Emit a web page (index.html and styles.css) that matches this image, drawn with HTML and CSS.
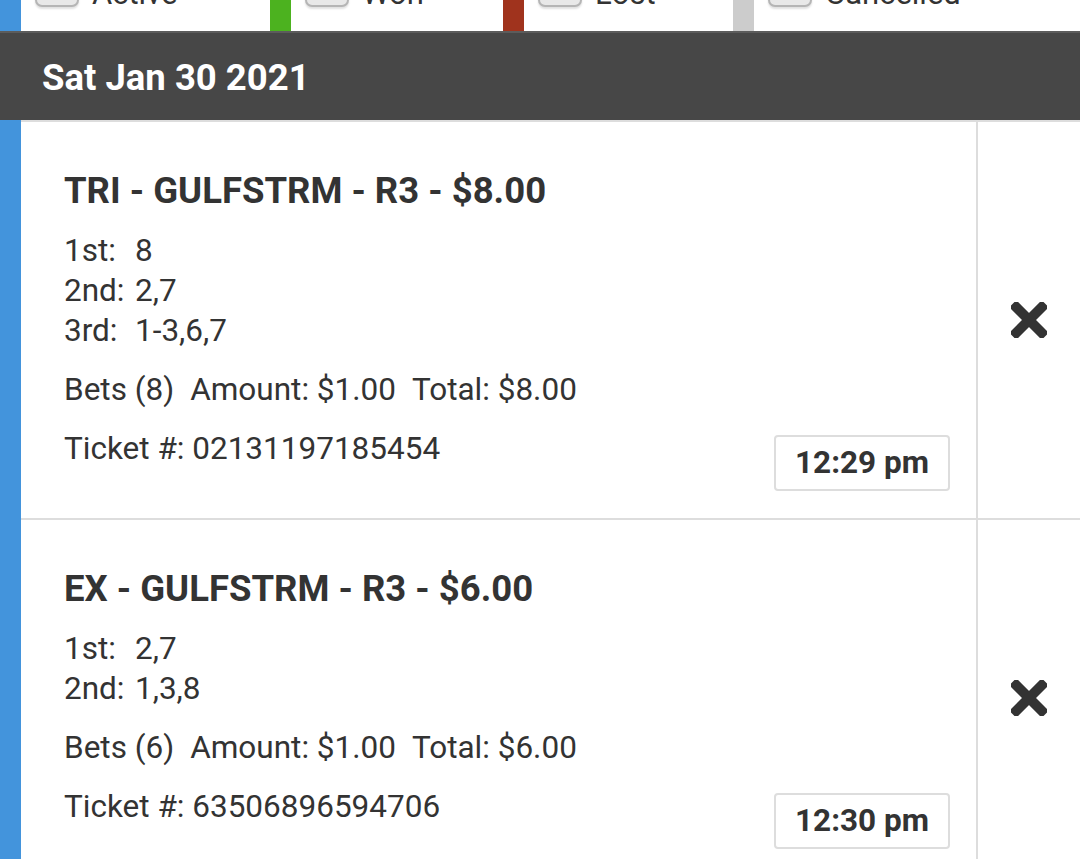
FILE: index.html
```html
<!DOCTYPE html>
<html lang="en">

<head>
    <meta charset="UTF-8">
    <meta name="viewport" content="width=device-width, initial-scale=1.0">
    <title>My Tickets</title>
    <link rel="stylesheet" href="styles.css">
</head>

<body>
    <div class="legend">
        <label class="legend-item active"><span class="check"></span><span class="legend-text">Active</span></label>
        <label class="legend-item won"><span class="check"></span><span class="legend-text">Won</span></label>
        <label class="legend-item lost"><span class="check"></span><span class="legend-text">Lost</span></label>
        <label class="legend-item cancelled"><span class="check"></span><span class="legend-text">Cancelled</span></label>
    </div>

    <div class="day-header">Sat Jan 30 2021</div>

    <div class="ticket-list">
        <div class="ticket">
            <div class="ticket-main">
                <div class="ticket-title">TRI - GULFSTRM - R3 - $8.00</div>
                <div class="legs">
                    <span>1st:</span><span>8</span>
                    <span>2nd:</span><span>2,7</span>
                    <span>3rd:</span><span>1-3,6,7</span>
                </div>
                <div class="bets">
                    <span>Bets (8)</span><span>Amount: $1.00</span><span>Total: $8.00</span>
                </div>
                <div class="ticket-foot">
                    <span class="ticket-no">Ticket #: 02131197185454</span>
                    <span class="time">12:29 pm</span>
                </div>
            </div>
            <div class="ticket-action">
                <svg class="remove" width="36" height="36" viewBox="0 0 36 36">
                    <rect x="-5" y="13" width="46" height="10" rx="1.5" transform="rotate(45 18 18)" />
                    <rect x="-5" y="13" width="46" height="10" rx="1.5" transform="rotate(-45 18 18)" />
                </svg>
            </div>
        </div>

        <div class="ticket">
            <div class="ticket-main">
                <div class="ticket-title">EX - GULFSTRM - R3 - $6.00</div>
                <div class="legs">
                    <span>1st:</span><span>2,7</span>
                    <span>2nd:</span><span>1,3,8</span>
                </div>
                <div class="bets">
                    <span>Bets (6)</span><span>Amount: $1.00</span><span>Total: $6.00</span>
                </div>
                <div class="ticket-foot">
                    <span class="ticket-no">Ticket #: 63506896594706</span>
                    <span class="time">12:30 pm</span>
                </div>
            </div>
            <div class="ticket-action">
                <svg class="remove" width="36" height="36" viewBox="0 0 36 36">
                    <rect x="-5" y="13" width="46" height="10" rx="1.5" transform="rotate(45 18 18)" />
                    <rect x="-5" y="13" width="46" height="10" rx="1.5" transform="rotate(-45 18 18)" />
                </svg>
            </div>
        </div>
    </div>
</body>

</html>
```

FILE: styles.css
```css
body {
    margin: 0;
    background-color: #fff;
    color: #333;
    font-family: Roboto, "Liberation Sans", sans-serif;
}

/* legend is scrolled mostly out of view */
.legend {
    display: grid;
    grid-template-columns: 270px 233px 230px 1fr;
    margin-top: -59px;
    height: 90px;
    background-color: #fff;
    border-bottom: 2px solid #5c5c5c;
}

.legend-item {
    display: flex;
    align-items: center;
    padding-left: 14px;
    font-size: 31px;
    border-left: 21px solid #ccc;
}

.legend-text {
    margin-top: 14px;
}

.legend-item.active {
    border-left-color: #4394dc;
}

.legend-item.won {
    border-left-color: #4cb21f;
}

.legend-item.lost {
    border-left-color: #a0331d;
}

.legend-item.cancelled {
    border-left-color: #cccccc;
}

.check {
    width: 40px;
    height: 38px;
    margin-right: 13px;
    border: 2px solid #b5b5b5;
    border-radius: 7px;
    background-color: #e8e8e8;
    box-shadow: 0 2px 2px rgba(0, 0, 0, 0.12);
}

.day-header {
    background-color: #474747;
    color: #fff;
    font-size: 36.5px;
    font-weight: bold;
    height: 84px;
    line-height: 84px;
    padding: 3px 0 0 42px;
}

.ticket-list {
    border-left: 21px solid #4394dc;
}

.ticket {
    display: flex;
    border-bottom: 2px solid #ddd;
}

.ticket:first-child {
    border-top: 2px solid #ddd;
}

.ticket-main {
    flex: 1;
    padding: 49px 26px 27px 43px;
    border-right: 2px solid #ddd;
    font-size: 31.5px;
    line-height: 40px;
}

.ticket-title {
    font-size: 36.5px;
    font-weight: bold;
    margin-bottom: 20px;
}

.legs {
    display: grid;
    grid-template-columns: 71px 1fr;
}

.bets {
    margin-top: 19px;
}

.bets span {
    margin-right: 16px;
}

.ticket-foot {
    display: flex;
    justify-content: space-between;
    align-items: flex-end;
    margin-top: 19px;
}

.ticket-no {
    padding-bottom: 22px;
}

.time {
    border: 2px solid #ddd;
    border-radius: 4px;
    padding: 0 19px;
    height: 52px;
    line-height: 52px;
    font-size: 31.5px;
    font-weight: bold;
}

.ticket-action {
    width: 102px;
    display: flex;
    align-items: center;
    justify-content: center;
}

.remove {
    fill: #333;
}
```
